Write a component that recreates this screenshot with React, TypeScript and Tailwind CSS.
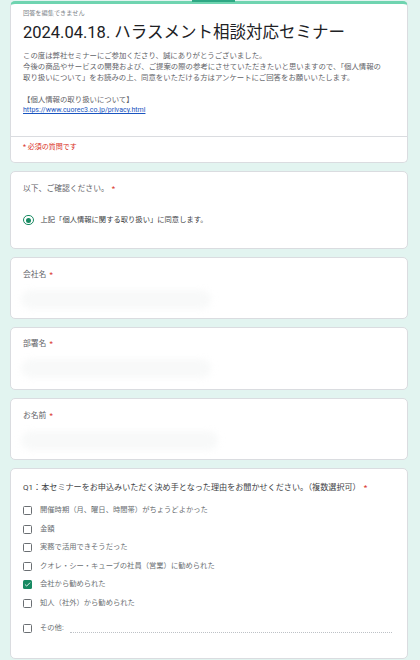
const font = { fontFamily: 'Roboto, "Noto Sans CJK JP", sans-serif' };

function Card({ className = "", children }: { className?: string; children: React.ReactNode }) {
  return (
    <div className={`rounded-[5px] border border-[#dadce0] bg-white ${className}`}>{children}</div>
  );
}

function Req() {
  return <span className="ml-[3px] text-[#d93025]">*</span>;
}

function Blur({ w }: { w: string }) {
  return (
    <div className={`mt-[9px] ml-[-2px] h-[19px] ${w} rounded-full bg-[#f8f9f9] blur-[3px]`} />
  );
}

function Checkbox({ checked }: { checked?: boolean }) {
  if (checked) {
    return (
      <div className="flex h-[9px] w-[9px] shrink-0 items-center justify-center rounded-[1.5px] bg-[#188a62]">
        <svg width="7" height="7" viewBox="0 0 24 24" fill="none">
          <path d="M4 12.5l5 5L20 6.5" stroke="white" strokeWidth="3" strokeLinecap="round" strokeLinejoin="round" />
        </svg>
      </div>
    );
  }
  return <div className="h-[9px] w-[9px] shrink-0 rounded-[1.5px] border-[1.5px] border-[#6b6f73]" />;
}

const options = [
  { label: "開催時期（月、曜日、時間帯）がちょうどよかった" },
  { label: "金額" },
  { label: "実務で活用できそうだった" },
  { label: "クオレ・シー・キューブの社員（営業）に勧められた" },
  { label: "会社から勧められた", checked: true },
  { label: "知人（社外）から勧められた" },
];

export default function App() {
  return (
    <div className="relative min-h-[660px] bg-[#e2f4f0] pt-[1px] pl-[10px] pr-[12px]" style={font}>
      <div className="absolute left-[192px] top-0 h-[1.5px] w-[43px] bg-[#2ea884]" />

      {/* header */}
      <div className="h-[162px] overflow-hidden rounded-[5px] border border-t-[3px] border-[#dadce0] border-t-[#6fd4b0] bg-white">
        <div className="px-[12px] pt-[5px]">
          <div className="text-[6.2px] leading-[9px] text-[#80868b]">回答を編集できません</div>
          <h1 className="mt-[5px] whitespace-nowrap text-[16.5px] leading-[20px] text-[#202124]">
            2024.04.18. ハラスメント相談対応セミナー
          </h1>
          <div className="mt-[7px] whitespace-nowrap text-[7.4px] leading-[11px] text-[#5f6368]">
            <div>この度は弊社セミナーにご参加くださり、誠にありがとうございました。</div>
            <div>今後の商品やサービスの開発および、ご提案の際の参考にさせていただきたいと思いますので、「個人情報の</div>
            <div>取り扱いについて」をお読みの上、同意をいただける方はアンケートにご回答をお願いいたします。</div>
            <div className="h-[11px]" />
            <div>【個人情報の取り扱いについて】</div>
            <div className="text-[7px] text-[#1a55c0] underline">https://www.cuorec3.co.jp/privacy.html</div>
          </div>
        </div>
        <div className="mt-[20px] border-t border-[#dadce0] px-[12px] pt-[5px] text-[7px] leading-[11px] text-[#d93025]">
          * 必須の質問です
        </div>
      </div>

      {/* agreement */}
      <Card className="mt-[8px] h-[78px] px-[12px] pt-[11px]">
        <div className="text-[7.8px] leading-[12px] text-[#5f6368]">
          以下、ご確認ください。<Req />
        </div>
        <div className="mt-[19px] flex h-[12px] items-center">
          <div className="flex h-[10.5px] w-[10.5px] items-center justify-center rounded-full border-[1.5px] border-[#188a62]">
            <div className="h-[5px] w-[5px] rounded-full bg-[#188a62]" />
          </div>
          <span className="ml-[7px] text-[7.3px] text-[#3c4043]">上記「個人情報に関する取り扱い」に同意します。</span>
        </div>
      </Card>

      <Card className="mt-[8px] h-[62px] px-[12px] pt-[11px]">
        <div className="text-[7.8px] leading-[12px] text-[#5f6368]">
          会社名<Req />
        </div>
        <Blur w="w-[190px]" />
      </Card>

      <Card className="mt-[8px] h-[63px] px-[12px] pt-[10px]">
        <div className="text-[7.8px] leading-[12px] text-[#5f6368]">
          部署名<Req />
        </div>
        <Blur w="w-[190px]" />
      </Card>

      <Card className="mt-[8px] h-[62px] px-[12px] pt-[11px]">
        <div className="text-[7.8px] leading-[12px] text-[#5f6368]">
          お名前<Req />
        </div>
        <Blur w="w-[197px]" />
      </Card>

      {/* Q1 */}
      <Card className="mt-[8px] h-[191px] px-[12px] pt-[12px]">
        <div className="whitespace-nowrap text-[8.1px] leading-[12px] text-[#3c4043]">
          Q1：本セミナーをお申込みいただく決め手となった理由をお聞かせください。（複数選択可）
          <Req />
        </div>
        <div className="mt-[8.5px] flex flex-col">
          {options.map((o) => (
            <div key={o.label} className="flex h-[18.5px] items-center">
              <Checkbox checked={o.checked} />
              <span className="ml-[8px] text-[7.3px] text-[#6b6f73]">{o.label}</span>
            </div>
          ))}
          <div className="mt-[7px] flex h-[18.5px] items-center">
            <Checkbox />
            <span className="ml-[8px] text-[7.3px] text-[#6b6f73]">その他:</span>
            <div className="ml-[6px] mt-[8px] w-[322px] border-b border-dotted border-[#bdc1c6]" />
          </div>
        </div>
      </Card>
    </div>
  );
}
